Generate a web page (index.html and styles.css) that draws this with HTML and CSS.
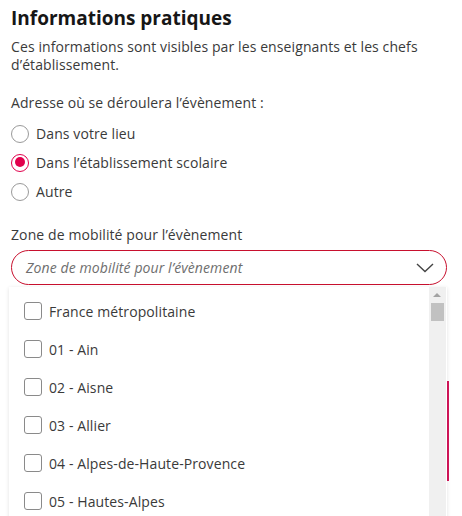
FILE: index.html
```html
<!DOCTYPE html>
<html lang="fr">
<head>
<meta charset="utf-8">
<link rel="stylesheet" href="styles.css">
</head>
<body>
<div class="page">
  <h2 class="title">Informations pratiques</h2>
  <p class="desc">Ces informations sont visibles par les enseignants et les chefs d’établissement.</p>

  <div class="group">
    <div class="label">Adresse où se déroulera l’évènement :</div>
    <label class="radio"><span class="circle"></span>Dans votre lieu</label>
    <label class="radio"><span class="circle checked"></span>Dans l’établissement scolaire</label>
    <label class="radio"><span class="circle"></span>Autre</label>
  </div>

  <div class="field">
    <div class="label">Zone de mobilité pour l’évènement</div>
    <div class="select">
      <span class="placeholder">Zone de mobilité pour l’évènement</span>
      <svg class="chev" width="18" height="10" viewBox="0 0 18 10"><path d="M1 1 L9 8.5 L17 1" fill="none" stroke="#444" stroke-width="1.4"/></svg>
    </div>
    <div class="dropdown-wrap">
      <div class="redline"></div>
      <div class="dropdown">
        <ul class="options">
          <li><span class="box"></span>France métropolitaine</li>
          <li><span class="box"></span>01 - Ain</li>
          <li><span class="box"></span>02 - Aisne</li>
          <li><span class="box"></span>03 - Allier</li>
          <li><span class="box"></span>04 - Alpes-de-Haute-Provence</li>
          <li><span class="box"></span>05 - Hautes-Alpes</li>
        </ul>
        <div class="scrollbar">
          <span class="arrow"></span>
          <span class="thumb"></span>
        </div>
      </div>
    </div>
  </div>
</div>
</body>
</html>
```

FILE: styles.css
```css
* { box-sizing: border-box; }
html, body { margin: 0; padding: 0; background: #fff; overflow: hidden; }
body { font-family: "Open Sans", "Liberation Sans", sans-serif; color: #3a3a3a; letter-spacing: 0.1px; }
.page { padding: 5px 15px 0 11px; width: 462px; }
.title { margin: 0; font-size: 19px; font-weight: 700; color: #161616; line-height: 26px; letter-spacing: 0; }
.desc { margin: 7px 0 0; font-size: 14px; line-height: 18px; color: #3a3a3a; }
.group { margin-top: 20px; }
.label { font-size: 14px; line-height: 18px; color: #3a3a3a; }
.radio { display: flex; align-items: center; gap: 7px; font-size: 14px; height: 29px; color: #3a3a3a; }
.group .label { margin-bottom: 7px; }
.circle { width: 18px; height: 18px; border: 1.5px solid #9a9a9a; border-radius: 50%; display: inline-block; position: relative; flex: none; }
.circle.checked { border-color: #e1004c; }
.circle.checked::after { content: ""; position: absolute; left: 2.5px; top: 2.5px; width: 10px; height: 10px; border-radius: 50%; background: #e1004c; }
.field { margin-top: 20px; }
.select { margin-top: 6px; height: 35px; border: 1.5px solid #c8102e; border-radius: 18px; display: flex; align-items: center; justify-content: space-between; padding: 0 12px 0 14px; }
.placeholder { font-style: italic; font-size: 14px; color: #6e6e6e; }
.chev { display: block; }
.dropdown-wrap { position: relative; margin: 2px -2px 0 -2px; }
.redline { position: absolute; right: 0; top: 94px; width: 2px; height: 100px; background: #d6155b; }
.dropdown { position: relative; display: flex; height: 240px; background: #fff; box-shadow: 0 1px 4px rgba(0,0,0,0.12); margin-right: 2px; }
.options { list-style: none; margin: 0; padding: 0 0 0 15px; flex: 1; }
.options li { display: flex; align-items: center; gap: 7px; height: 38px; font-size: 14px; color: #3a3a3a; }
.options li:first-child { margin-top: 5px; }
.box { width: 18px; height: 18px; border: 1.5px solid #8a8a8a; border-radius: 3px; flex: none; }
.scrollbar { width: 17px; background: #f0f0f0; position: relative; margin-right: 1px; }
.arrow { position: absolute; left: 4px; top: 6px; width: 0; height: 0; border-left: 4px solid transparent; border-right: 4px solid transparent; border-bottom: 4px solid #a3a3a3; }
.thumb { position: absolute; left: 2px; top: 16px; width: 13px; height: 18px; background: #c1c1c1; }
```
